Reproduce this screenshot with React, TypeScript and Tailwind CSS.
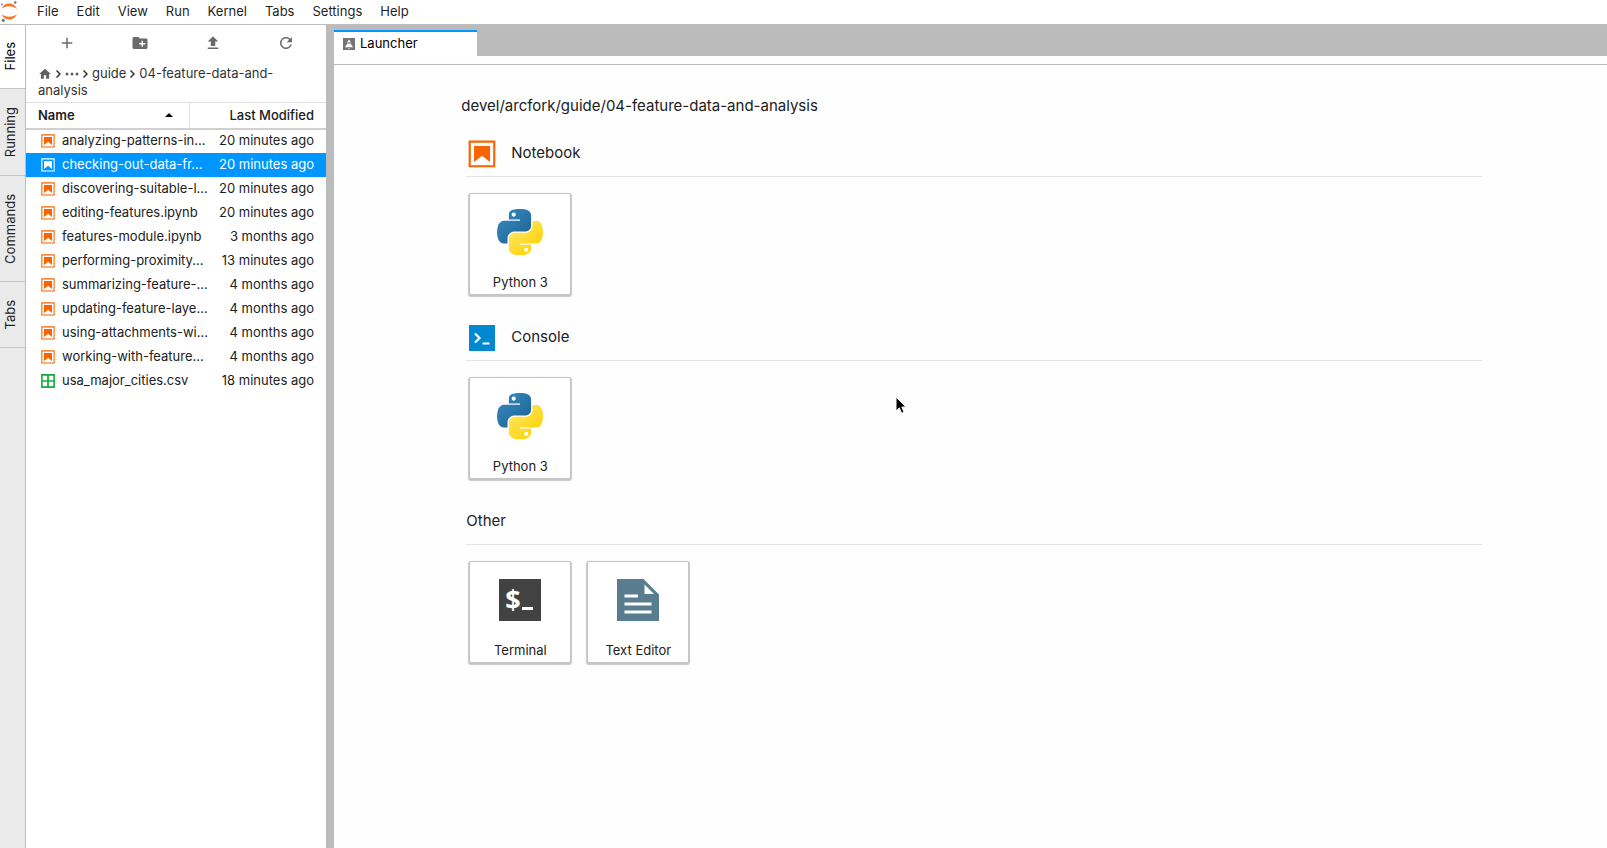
import type { ReactNode } from "react";

interface FileEntry {
  name: string;
  modified: string;
  kind: "notebook" | "csv";
  selected?: boolean;
}

const menus = ["File", "Edit", "View", "Run", "Kernel", "Tabs", "Settings", "Help"];

const sideTabs = [
  { label: "Files", className: "h-16 bg-white text-black" },
  { label: "Running", className: "h-[87px] bg-[#eaeaea]" },
  { label: "Commands", className: "h-[106px] bg-[#eaeaea]" },
  { label: "Tabs", className: "h-[66px] bg-[#eaeaea]" },
];

const files: FileEntry[] = [
  { name: "analyzing-patterns-in...", modified: "20 minutes ago", kind: "notebook" },
  { name: "checking-out-data-fr...", modified: "20 minutes ago", kind: "notebook", selected: true },
  { name: "discovering-suitable-l...", modified: "20 minutes ago", kind: "notebook" },
  { name: "editing-features.ipynb", modified: "20 minutes ago", kind: "notebook" },
  { name: "features-module.ipynb", modified: "3 months ago", kind: "notebook" },
  { name: "performing-proximity...", modified: "13 minutes ago", kind: "notebook" },
  { name: "summarizing-feature-...", modified: "4 months ago", kind: "notebook" },
  { name: "updating-feature-laye...", modified: "4 months ago", kind: "notebook" },
  { name: "using-attachments-wi...", modified: "4 months ago", kind: "notebook" },
  { name: "working-with-feature...", modified: "4 months ago", kind: "notebook" },
  { name: "usa_major_cities.csv", modified: "18 minutes ago", kind: "csv" },
];

function JupyterLogo() {
  return (
    <svg width="18" height="24" viewBox="0 0 18 24" className="shrink-0">
      <path d="M1.5 9C3 5.200 6 3.500 9.200 3.500S15.500 5.200 17 9C15 7.300 12.500 6.300 9.200 6.300S3.500 7.300 1.500 9z" fill="#f37726" />
      <path d="M1.500 14C3 17.800 6 19.500 9.200 19.500S15.500 17.800 17 14C15 15.700 12.500 16.700 9.200 16.700S3.500 15.700 1.500 14z" fill="#f37726" />
      <circle cx="15.200" cy="2.500" r="1.300" fill="#767677" />
      <circle cx="2" cy="4.500" r="0.900" fill="#767677" />
      <circle cx="3.300" cy="20.300" r="1.600" fill="#767677" />
    </svg>
  );
}

function NotebookIcon({ size, color = "#f96302" }: { size: number; color?: string }) {
  return (
    <svg width={size} height={size} viewBox="0 0 22 22" fill={color} className="shrink-0">
      <path d="M18.700 3.300v15.400H3.300V3.300h15.400m1.500-1.500H1.800v18.300h18.300l.1-18.300z" />
      <path d="M16.500 16.500l-5.400-4.300-5.600 4.300v-11h11z" />
    </svg>
  );
}

function SpreadsheetIcon() {
  return (
    <svg width="16" height="16" viewBox="0 0 22 22" fill="#15ab3c" className="shrink-0">
      <path d="M1.500 1.500v19h19v-19h-19zM9.800 18.300H3.700v-6.100h6.100v6.100zm0-8.300H3.700V3.700h6.100V10zm8.500 8.300h-6.100v-6.100h6.100v6.100zm0-8.300h-6.100V3.700h6.100V10z" />
    </svg>
  );
}

function ConsoleIcon() {
  return (
    <svg width="26" height="26" viewBox="0 0 26 26" fill="none" className="shrink-0">
      <rect width="26" height="26" fill="#0288d1" />
      <path d="M6 8.500l4.500 4.500L6 17.500" stroke="#fff" strokeWidth="2.200" />
      <path d="M13.500 18.500h7" stroke="#fff" strokeWidth="2" />
    </svg>
  );
}

function PythonIcon({ id }: { id: string }) {
  return (
    <svg width="46" height="46" viewBox="0 0 111 111">
      <defs>
        <linearGradient id={`${id}-blue`} x1="0" y1="0" x2="0.800" y2="0.900">
          <stop offset="0" stopColor="#3a8cc4" />
          <stop offset="1" stopColor="#1f6797" />
        </linearGradient>
        <linearGradient id={`${id}-yellow`} x1="0.200" y1="0.100" x2="0.800" y2="0.800">
          <stop offset="0" stopColor="#ffe55f" />
          <stop offset="1" stopColor="#ffd40a" />
        </linearGradient>
      </defs>
      <path
        d="M54.900 0c-4.600 0-9 .4-12.800 1.100C30.800 3.100 28.700 7.300 28.700 15v10.200h26.800v3.400H18.700c-7.800 0-14.600 4.700-16.700 13.600-2.500 10.200-2.600 16.600 0 27.200 1.900 7.900 6.500 13.600 14.200 13.600h9.200V70.800c0-8.900 7.700-16.700 16.800-16.700h26.700c7.400 0 13.400-6.100 13.400-13.600V15c0-7.300-6.100-12.700-13.400-13.900C64.300.3 59.500 0 54.900 0zM40.400 8.200c2.800 0 5 2.300 5 5.100s-2.200 5.100-5 5.100-5-2.300-5-5.100 2.300-5.100 5-5.100z"
        fill={`url(#${id}-blue)`}
      />
      <path
        d="M85.600 28.700v11.900c0 9.200-7.800 17-16.800 17H42.100c-7.300 0-13.400 6.300-13.400 13.600v25.500c0 7.300 6.300 11.500 13.400 13.600 8.500 2.500 16.600 2.900 26.700 0 6.700-2 13.400-5.900 13.400-13.600V86.500H55.500v-3.400h40.100c7.800 0 10.700-5.400 13.400-13.600 2.800-8.400 2.700-16.500 0-27.200-1.900-7.700-5.600-13.600-13.400-13.600h-10zM70.600 93.300c2.800 0 5 2.300 5 5.100s-2.200 5.100-5 5.100-5-2.300-5-5.100 2.200-5.100 5-5.100z"
        fill={`url(#${id}-yellow)`}
      />
    </svg>
  );
}

function TerminalIcon() {
  return (
    <svg width="42" height="42" viewBox="0 0 42 42">
      <rect width="42" height="42" fill="#424242" />
      <text x="14" y="30" textAnchor="middle" fill="#fff" className="font-['Open_Sans',sans-serif] text-[27px] font-bold">
        $
      </text>
      <path d="M23 28h11v3H23z" fill="#fff" />
    </svg>
  );
}

function TextEditorIcon() {
  return (
    <svg width="42" height="42" viewBox="0 0 42 42">
      <path d="M0 0h26.500L42 15.500V42H0z" fill="#577d8e" />
      <path d="M27.500 5.500v9.500H37z" fill="#fff" />
      <path d="M7.500 15.500H21v3H7.500zM7.500 23.500h27v3h-27zM7.500 31.500h27v3h-27z" fill="#fff" />
    </svg>
  );
}

function LauncherTabIcon() {
  return (
    <svg width="12" height="12" viewBox="0 0 24 24">
      <rect width="24" height="24" fill="#757575" />
      <path d="M12 3c2.500 2.500 3.300 5.500 3.200 9l3.800 4v3.500L15 18l-1 3h-4l-1-3-4 1.500V16l3.800-4C8.700 8.500 9.500 5.500 12 3z" fill="#fff" />
      <circle cx="12" cy="10" r="1.800" fill="#757575" />
      <path d="M8 18h8v1.500H8z" fill="#757575" />
    </svg>
  );
}

function ToolButton({ label, path }: { label: string; path: string }) {
  return (
    <button type="button" aria-label={label} className="flex h-9 flex-1 items-center justify-center">
      <svg width="18" height="18" viewBox="0 0 24 24" fill="#6b6b6b">
        <path d={path} />
      </svg>
    </button>
  );
}

function Chevron() {
  return (
    <svg width="5" height="10" viewBox="0 0 5 10" fill="none" stroke="#333" strokeWidth="1.500">
      <path d="M.5 1.500L4 5 .5 8.500" />
    </svg>
  );
}

function MenuBar() {
  return (
    <header className="flex h-[25px] items-center border-b border-[#bdbdbd] bg-white">
      <JupyterLogo />
      <nav className="ml-[10px] flex">
        {menus.map((menu) => (
          <button key={menu} type="button" className="h-6 px-[9px] text-[#1f1f1f]">
            {menu}
          </button>
        ))}
      </nav>
    </header>
  );
}

function SideBar() {
  return (
    <div className="w-[26px] shrink-0 border-r border-[#bdbdbd] bg-[#eaeaea]">
      {sideTabs.map((tab) => (
        <button
          key={tab.label}
          type="button"
          className={`flex w-full items-center justify-center border-b border-[#c4c4c4] pr-1 ${tab.className}`}
        >
          <span className="rotate-180 [writing-mode:vertical-rl]">{tab.label}</span>
        </button>
      ))}
    </div>
  );
}

function FileBrowser() {
  return (
    <aside className="w-[300px] shrink-0 bg-white">
      <div className="flex px-1">
        <ToolButton label="New Launcher" path="M19 13h-6v6h-2v-6H5v-2h6V5h2v6h6v2z" />
        <ToolButton
          label="New Folder"
          path="M20 6h-8l-2-2H4c-1.110 0-1.990.89-1.990 2L2 18c0 1.110.89 2 2 2h16c1.110 0 2-.89 2-2V8c0-1.110-.89-2-2-2zm-1 8h-3v3h-2v-3h-3v-2h3V9h2v3h3v2z"
        />
        <ToolButton label="Upload Files" path="M9 16h6v-6h4l-7-7-7 7h4zm-4 2h14v2H5z" />
        <ToolButton
          label="Refresh File List"
          path="M12 20c-4.400 0-8-3.600-8-8s3.600-8 8-8c2.200 0 4.200.9 5.700 2.300L20 4v7h-7l3.200-3.200C15.100 6.700 13.700 6 12 6c-3.300 0-6 2.700-6 6s2.700 6 6 6c2.600 0 4.800-1.700 5.700-4h2.100c-.9 3.400-4.100 6-7.800 6z"
        />
      </div>

      <div className="px-3 pt-1 pb-[3px] leading-[17px] text-[#333]">
        <div className="flex items-center gap-1">
          <a href="#home" aria-label="Home">
            <svg width="14" height="14" viewBox="0 0 24 24" fill="#616161">
              <path d="M10 20v-6h4v6h5v-8h3L12 3 2 12h3v8z" />
            </svg>
          </a>
          <Chevron />
          <a href="#parent" aria-label="Parent folders">
            <svg width="14" height="4" viewBox="0 0 14 4" fill="#616161">
              <circle cx="2" cy="2" r="1.500" />
              <circle cx="7" cy="2" r="1.500" />
              <circle cx="12" cy="2" r="1.500" />
            </svg>
          </a>
          <Chevron />
          <a href="#guide">guide</a>
          <Chevron />
          <a href="#current">04-feature-data-and-</a>
        </div>
        <a href="#current" className="block">
          analysis
        </a>
      </div>

      <table className="w-full table-fixed">
        <thead>
          <tr className="h-[26px] border-t border-b-2 border-t-[#e0e0e0] border-b-[#d0d0d0]">
            <th className="w-[163px] border-r border-[#e0e0e0] pr-4 pl-3 text-left font-semibold">
              <div className="flex items-center justify-between">
                Name
                <svg width="8" height="4" viewBox="0 0 8 4">
                  <path d="M0 4l4-4 4 4z" />
                </svg>
              </div>
            </th>
            <th className="pr-3 text-right font-medium">Last Modified</th>
          </tr>
        </thead>
        <tbody>
          {files.map((file) => (
            <tr key={file.name} className={file.selected ? "h-6 bg-[#0096ff] text-white" : "h-6"}>
              <td className="pl-[14px] whitespace-nowrap">
                <div className="flex items-center gap-[6px]">
                  {file.kind === "notebook" ? (
                    <NotebookIcon size={16} color={file.selected ? "#ffffff" : "#f96302"} />
                  ) : (
                    <SpreadsheetIcon />
                  )}
                  {file.name}
                </div>
              </td>
              <td className="pr-3 text-right whitespace-nowrap">{file.modified}</td>
            </tr>
          ))}
        </tbody>
      </table>
    </aside>
  );
}

function Card({ label, children }: { label: string; children: ReactNode }) {
  return (
    <button
      type="button"
      className="flex h-[102px] w-[102px] flex-col items-center justify-between rounded-xs border border-[#c4c4c4] bg-white pt-[14px] pb-[2px] shadow-[0_1px_1px_1px_rgba(0,0,0,0.22)]"
    >
      <span className="flex h-[48px] items-center">{children}</span>
      <span className="leading-5">{label}</span>
    </button>
  );
}

function Section({ title, icon, children }: { title: string; icon?: ReactNode; children: ReactNode }) {
  return (
    <section className="-mr-0.5 mb-0.5 ml-[5px]">
      <h2 className="flex h-[46px] items-center gap-4 border-b border-[#e4e4e4] text-[15px]">
        {icon && <span className="ml-[3px] flex w-[26px] justify-center">{icon}</span>}
        {title}
      </h2>
      <div className="flex gap-4 px-[3px] pt-4 pb-[18px]">{children}</div>
    </section>
  );
}

function Launcher() {
  return (
    <main className="min-w-0 flex-1 bg-[#fefefe]">
      <div className="flex h-[31px] items-end bg-[#bbb]">
        <div className="flex h-[26px] w-[143px] items-center gap-[5px] border-t-2 border-[#0096ff] bg-white pl-[9px] text-black">
          <LauncherTabIcon />
          Launcher
        </div>
      </div>
      <div className="h-[9px] border-b border-[#bdbdbd]" />
      <div className="px-[10%] pt-[29px]">
        <p className="mb-[13px] text-[15px] leading-6">devel/arcfork/guide/04-feature-data-and-analysis</p>
        <Section title="Notebook" icon={<NotebookIcon size={32} />}>
          <Card label="Python 3">
            <PythonIcon id="notebook" />
          </Card>
        </Section>
        <Section title="Console" icon={<ConsoleIcon />}>
          <Card label="Python 3">
            <PythonIcon id="console" />
          </Card>
        </Section>
        <Section title="Other">
          <Card label="Terminal">
            <TerminalIcon />
          </Card>
          <Card label="Text Editor">
            <TextEditorIcon />
          </Card>
        </Section>
      </div>
    </main>
  );
}

export default function App() {
  return (
    <div className="flex min-h-screen flex-col bg-white font-['Inter',sans-serif] text-[13px] text-[#212121]">
      <MenuBar />
      <div className="flex flex-1">
        <SideBar />
        <FileBrowser />
        <div className="w-2 shrink-0 bg-[#bbb]" />
        <Launcher />
      </div>
      <svg width="12" height="19" viewBox="0 0 12 19" className="absolute top-[396px] left-[895px]">
        <path d="M1 1v14l3.300-3.100 2.300 5.400 2.500-1-2.300-5.300H11z" fill="#000" stroke="#fff" />
      </svg>
    </div>
  );
}
